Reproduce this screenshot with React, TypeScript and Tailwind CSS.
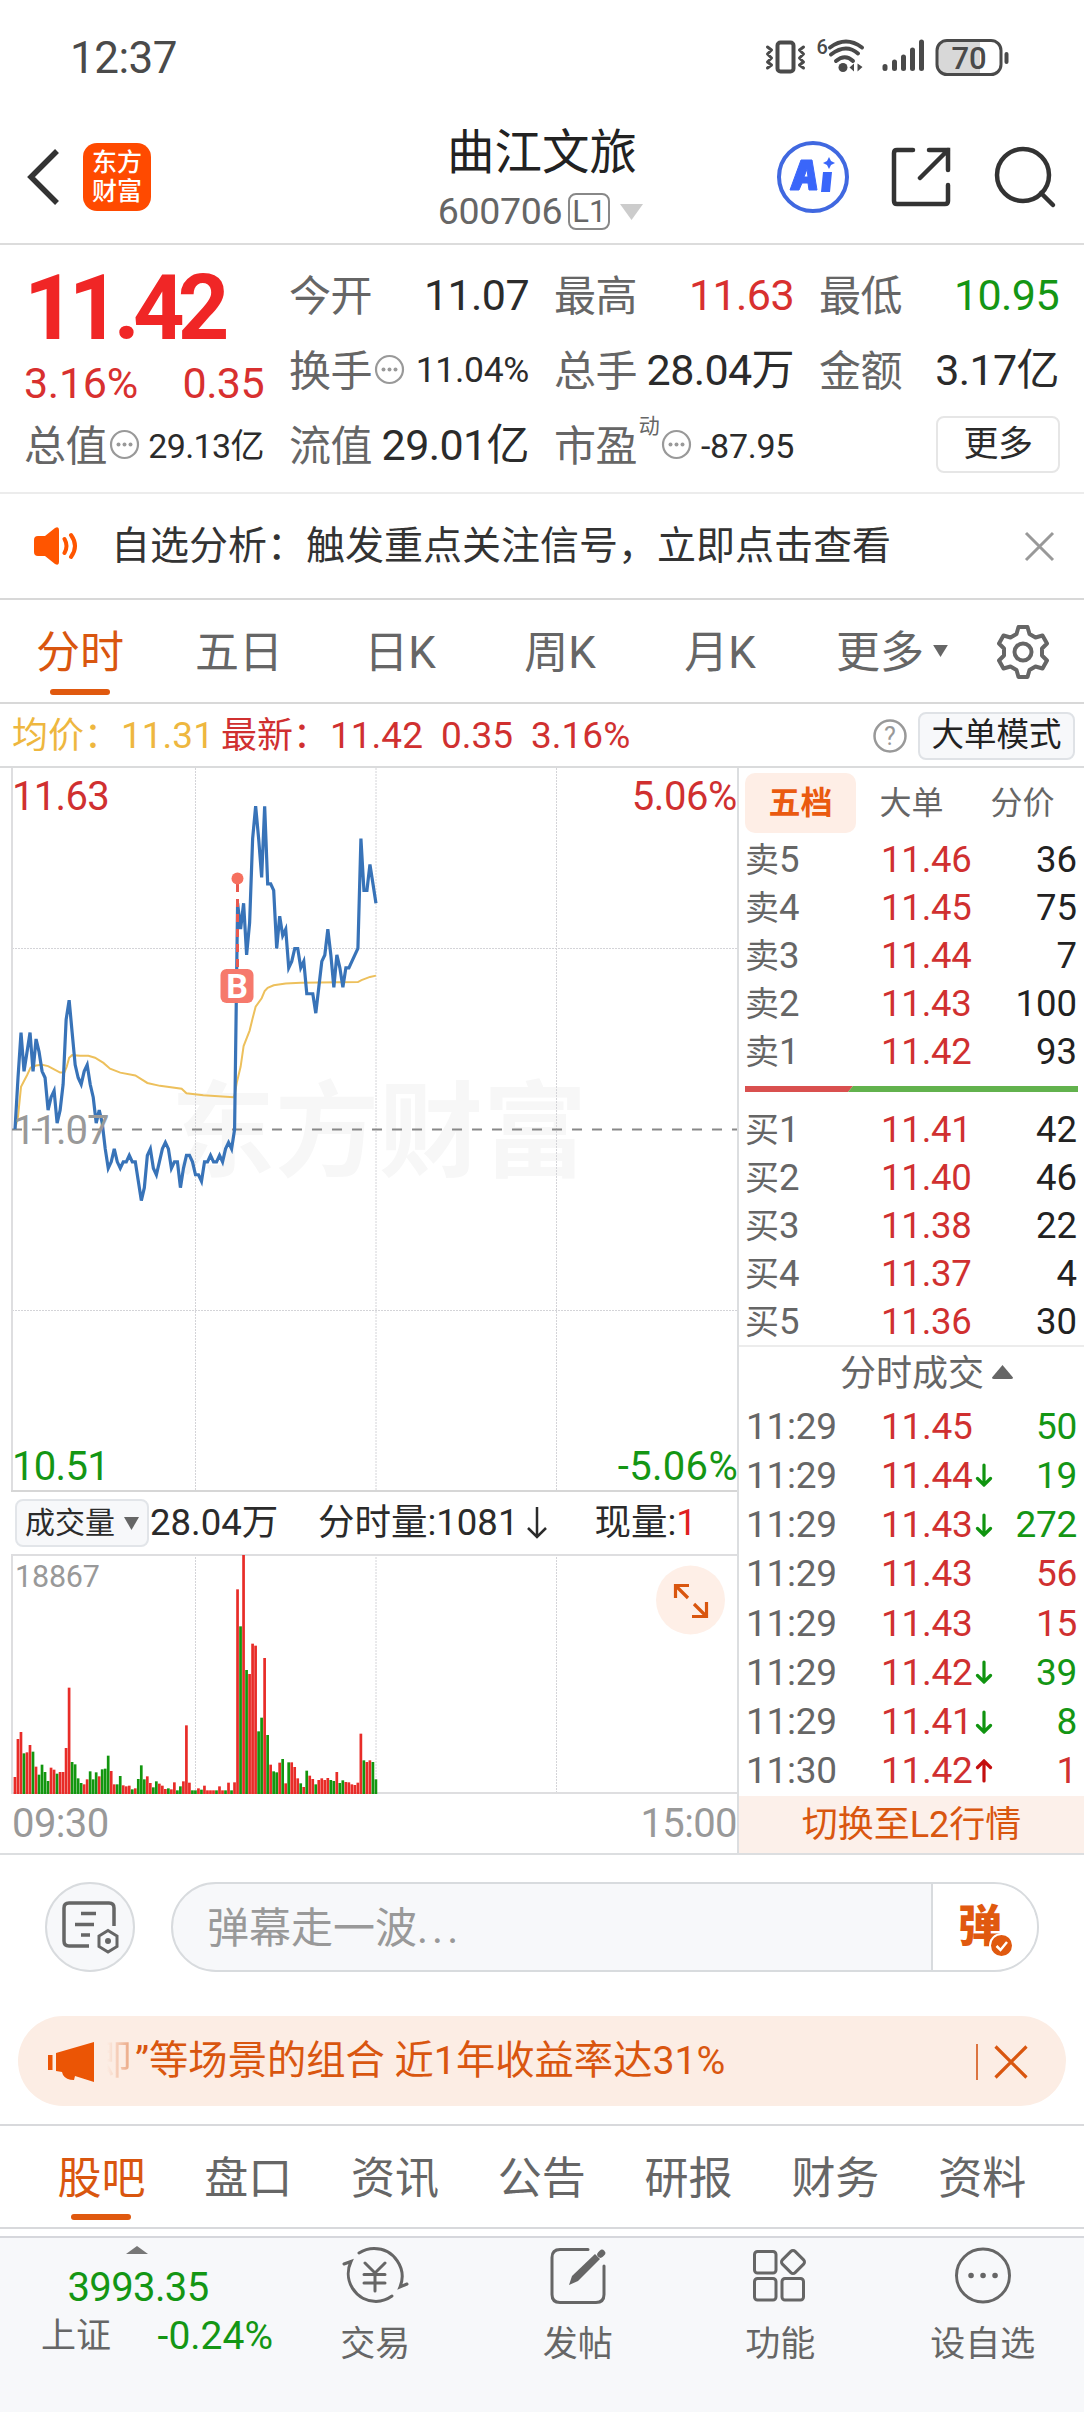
import type { ReactNode } from 'react'

// 相对昨收 11.07 的价差（单位：分），每分钟一个点
const PRICE_TICKS = [
  0, 8, 15, 9, 12, 15, 9, 14, 12, 9, 8, 3, 5, 6, 1, 3, 7, 17, 20, 15, 10, 8, 7, 9, 10, 7, 5, 1, 3, 1,
  -3, -6, -5, -3, -5, -6, -5, -5, -4, -5, -5, -8, -11, -9, -4, -3, -6, -7, -5, -3, -2, -3, -6, -5, -5,
  -9, -6, -4, -4, -5, -7, -7, -8, -5, -5, -4, -5, -5, -4, -5, -3, -2, -3, 0, 35, 31, 35, 27, 32, 45, 50,
  45, 39, 50, 38, 38, 37, 28, 33, 30, 31, 25, 26, 28, 28, 25, 26, 21, 21, 21, 18, 22, 26, 27, 31, 27, 22,
  27, 25, 22, 25, 25, 26, 27, 28, 45, 37, 37, 41, 38, 35,
]

// 均价线 [分钟, 价差]
const AVG_TICKS: [number, number][] = [
  [0, 0], [1, 2], [2, 6.6], [3, 7.5], [4, 8.4], [5.2, 9.6], [7, 9.9], [9, 10], [11, 9.8], [13, 9.3],
  [15, 8.8], [16.4, 8.8], [17.2, 9.7], [18, 11.1], [19, 11.5], [21.6, 11.4], [24.4, 11.4], [26.6, 11.1],
  [29.4, 10.3], [31.6, 9.4], [35, 8.8], [40, 8.35], [44, 7.2], [48.2, 6.75], [55.4, 6.3], [57, 5.6],
  [62.6, 5.3], [72.6, 5], [73, 5.3], [73.8, 7.4], [75, 9.7], [76, 12.9], [78, 15.3], [79, 17.2], [80, 19],
  [82, 20.3], [83, 21.4], [84, 21.9], [86, 22.3], [90, 22.6], [95, 22.7], [114, 22.8], [115.2, 23.1],
  [118, 23.6], [120, 23.8],
]

// 成交量，最高柱为 714；R 涨 G 跌
const VOLUMES =
  'R48 R162 R183 G119 R122 R144 G124 R79 G55 G85 G63 G36 R76 R70 G58 R63 R63 R135 R316 G93 G86 G44 G30 R26 R41 G65 G41 G62 R50 G71 G73 G112 R66 R26 G26 G51 R23 R20 R22 G11 R14 G42 G83 G41 R50 R30 G17 G35 R28 R22 R12 G14 R11 R32 G8 G20 R35 R203 R31 G8 G8 R14 G10 R22 R8 R8 R8 G8 R20 R8 G8 R31 G8 R32 R611 G500 R714 G369 R357 R448 R442 G185 G226 R405 G174 R85 G65 G62 R91 G102 R29 G92 R92 R78 R44 G29 R18 G67 R52 R42 G26 R39 R44 R39 R45 G39 G36 R63 G30 G38 R33 R32 R26 R24 R31 R178 G98 R93 R98 G93 G41'
    .split(' ')
    .map(s => ({ up: s[0] === 'R', h: Number(s.slice(1)) }))

const SELLS = [
  ['卖5', '11.46', '36'],
  ['卖4', '11.45', '75'],
  ['卖3', '11.44', '7'],
  ['卖2', '11.43', '100'],
  ['卖1', '11.42', '93'],
]

const BUYS = [
  ['买1', '11.41', '42'],
  ['买2', '11.40', '46'],
  ['买3', '11.38', '22'],
  ['买4', '11.37', '4'],
  ['买5', '11.36', '30'],
]

const DEALS = [
  { time: '11:29', price: '11.45', vol: '50', dir: '', up: false },
  { time: '11:29', price: '11.44', vol: '19', dir: 'down', up: false },
  { time: '11:29', price: '11.43', vol: '272', dir: 'down', up: false },
  { time: '11:29', price: '11.43', vol: '56', dir: '', up: true },
  { time: '11:29', price: '11.43', vol: '15', dir: '', up: true },
  { time: '11:29', price: '11.42', vol: '39', dir: 'down', up: false },
  { time: '11:29', price: '11.41', vol: '8', dir: 'down', up: false },
  { time: '11:30', price: '11.42', vol: '1', dir: 'up', up: true },
]

const minuteX = (i: number) => 15 + i * 3.008
const tickY = (t: number) => 363.5 - t * 6.465

function StatusBar() {
  return (
    <div className="h-[114px] pt-[1px] pl-[70px] pr-[73px] flex items-center justify-between text-[#4a4a4a]">
      <span className="text-[44px] leading-none tracking-[-0.5px]">12:37</span>
      <svg className="overflow-visible" width="246" height="38" viewBox="0 0 246 38" fill="none" stroke="#4a4a4a" strokeLinecap="round">
        <rect x="12.500" y="3.5" width="16" height="29" rx="3" strokeWidth="4" />
        <path d="M2.500 8l4 3-4 4 4 4-4 4 4 3-4 3M38.500 8l-4 3 4 4-4 4 4 4-4 3 4 3" strokeWidth="3" strokeLinejoin="round" />
        <text x="51.500" y="15" fontSize="20" fill="#4a4a4a" stroke="none" fontWeight="500">6</text>
        <path d="M65 8.500Q81 -3.500 97 8.500M66 15.500Q81 4 93 14.500M71 22Q80 14.500 88 22" strokeWidth="4" />
        <circle cx="78" cy="28.500" r="4.500" fill="#4a4a4a" stroke="none" />
        <path d="M84.500 28.500l4.500-4v8zM97.500 28l-5-3.500v8z" fill="#4a4a4a" stroke="none" />
        <path d="M120 27.500v2M129.500 23v6.500M138.500 18v11.500M147.500 11v18.500M156.500 3v26.500" strokeWidth="5" />
        <path d="M180 3h35v32h-35q-7 0-7-7V10q0-7 7-7z" fill="#d8d8d8" stroke="none" />
        <rect x="172" y="1.500" width="64" height="34" rx="10" strokeWidth="3" />
        <path d="M241.500 15v8" strokeWidth="4" />
        <text x="204" y="29.500" fontSize="31" fill="#4a4a4a" stroke="none" fontWeight="500" textAnchor="middle">70</text>
      </svg>
    </div>
  )
}

function Header() {
  return (
    <header className="h-[131px] pb-[3px] border-b-2 border-[#dcdcdc] flex items-center">
      <div className="w-[399px] pl-[26px] flex items-center">
        <svg width="34" height="56" viewBox="0 0 34 56" fill="none" stroke="#333" strokeWidth="5.500">
          <path d="M31 2L5 28l26 26" />
        </svg>
        <div className="ml-[23px] w-[68px] h-[68px] rounded-[14px] bg-[#ff4a00] flex items-center justify-center text-white text-[25px] leading-[29px] font-medium text-center">
          东方
          <br />
          财富
        </div>
      </div>
      <div className="w-[286px] flex flex-col items-center">
        <h1 className="h-[60px] pt-[1px] text-[47.500px] leading-[60px] text-[#222]">曲江文旅</h1>
        <div className="h-[50px] pt-[9px] pr-[3px] flex items-center text-[#666] text-[37.500px] leading-none">
          <span className="tracking-[-0.3px]">600706</span>
          <span className="ml-[6px] w-[42px] h-[37px] border-2 border-[#888] rounded-[8px] text-[31px] flex items-center justify-center">
            L1
          </span>
          <svg className="ml-[10px]" width="23" height="16" viewBox="0 0 23 16">
            <path d="M0 0h23L11.500 16z" fill="#ccc" />
          </svg>
        </div>
      </div>
      <div className="flex-1 pl-[91px] flex items-center">
        <svg width="74" height="74" viewBox="0 0 74 74" fill="none">
          <circle cx="37" cy="37" r="34" stroke="#4068e0" strokeWidth="4" />
          <path d="M25 20h11l5 30h-8l-1-7h-6l-3 7h-9zM31 29l-3 8h4z" fill="#3a66fa" stroke="#3a66fa" strokeWidth="1" strokeLinejoin="round" fillRule="evenodd" />
          <path d="M47 32h9l-2 20h-9zM53 17l2 4 4 2-4 2-2 4-2-4-4-2 4-2z" fill="#3a66fa" />
        </svg>
        <svg className="ml-[41px]" width="60" height="60" viewBox="0 0 60 60" fill="none" stroke="#333" strokeWidth="4.500" strokeLinecap="round">
          <path d="M22 3H6q-3 0-3 3v48q0 3 3 3h48q3 0 3-3V38M38 3h19v20M57 3L29 31" />
        </svg>
        <svg className="ml-[42px]" width="64" height="64" viewBox="0 0 64 64" fill="none" stroke="#333" strokeWidth="4.500" strokeLinecap="round">
          <circle cx="30" cy="30" r="26" />
          <path d="M48 48l12 12" />
        </svg>
      </div>
    </header>
  )
}

function InfoDot() {
  return (
    <svg className="shrink-0 ml-[2px] mb-[3px]" width="31" height="31" viewBox="0 0 31 31">
      <circle cx="15.500" cy="15.500" r="13.500" fill="none" stroke="#999" strokeWidth="2.200" />
      <circle cx="9.500" cy="15.500" r="2" fill="#999" />
      <circle cx="15.500" cy="15.500" r="2" fill="#999" />
      <circle cx="21.500" cy="15.500" r="2" fill="#999" />
    </svg>
  )
}

function Cell({ label, children }: { label: string; children: ReactNode }) {
  return (
    <div className="flex items-center h-[75px]">
      <span className="text-[#666] text-[42px] pt-[2px]">{label}</span>
      {children}
    </div>
  )
}

function Quote() {
  return (
    <section className="h-[249px] pt-[13px] pl-[24px] border-b-2 border-[#ececec] grid grid-cols-[240px_240px_240px_240px] gap-x-[25px] content-start text-[43px] leading-none tracking-[-0.6px] text-[#2b2b2b]">
      <div className="h-[150px] text-[#d8302f]">
        <div className="h-[101px] flex items-center text-[90px] font-bold tracking-[-6.800px] text-[#f02626]">11.42</div>
        <div className="mt-[3px] flex justify-between">
          <span className="tracking-[-0.3px]">3.16%</span>
          <span>0.35</span>
        </div>
      </div>
      <div>
        <Cell label="今开">
          <span className="ml-auto">11.07</span>
        </Cell>
        <Cell label="换手">
          <InfoDot />
          <span className="ml-auto text-[35.500px] tracking-[-0.3px]">11.04%</span>
        </Cell>
      </div>
      <div>
        <Cell label="最高">
          <span className="ml-auto text-[#d8302f]">11.63</span>
        </Cell>
        <Cell label="总手">
          <span className="ml-auto">28.04万</span>
        </Cell>
      </div>
      <div>
        <Cell label="最低">
          <span className="ml-auto text-[#149614]">10.95</span>
        </Cell>
        <Cell label="金额">
          <span className="ml-auto">3.17亿</span>
        </Cell>
      </div>
      <Cell label="总值">
        <InfoDot />
        <span className="ml-auto text-[34px]">29.13亿</span>
      </Cell>
      <Cell label="流值">
        <span className="ml-auto">29.01亿</span>
      </Cell>
      <Cell label="市盈">
        <span className="text-[21px] text-[#666] self-start pt-[8px] pl-[2px]">动</span>
        <InfoDot />
        <span className="ml-auto text-[34px] tracking-[-0.3px]">-87.95</span>
      </Cell>
      <div className="h-[75px] flex items-center justify-end">
        <button className="w-[124px] h-[57px] mb-[3px] -mr-[1px] border-2 border-[#e6e6e6] rounded-[8px] text-[35px]">更多</button>
      </div>
    </section>
  )
}

function Notice() {
  return (
    <section className="h-[106px] border-b-2 border-[#d8d8d8] pl-[34px] pr-[29px] flex items-center">
      <svg width="46" height="40" viewBox="0 0 46 40">
        <path d="M4 10h7L21 2q4-2 4 2v32q0 4-4 2l-10-8H4q-4 0-4-4V14q0-4 4-4z" fill="#ff5500" />
        <path d="M30.500 13q4 7 0 14M37 9q8 11 0 22" fill="none" stroke="#ff5500" strokeWidth="4" strokeLinecap="round" />
      </svg>
      <p className="ml-[31px] text-[39px] leading-none text-[#333] whitespace-nowrap">自选分析：触发重点关注信号，立即点击查看</p>
      <svg className="ml-auto" width="31" height="31" viewBox="0 0 31 31" stroke="#999" strokeWidth="3">
        <path d="M2 2l27 27M29 2L2 29" />
      </svg>
    </section>
  )
}

function PeriodTabs() {
  return (
    <nav className="h-[104px] border-b-2 border-[#d8d8d8] flex text-[44px] leading-[106px] text-[#666] whitespace-nowrap">
      <div className="w-[88px] ml-[36px] flex flex-col items-center text-[#d9560f]">
        <span className="h-[89px]">分时</span>
        <i className="w-[60px] h-[6px] rounded-full bg-[#e0590f]" />
      </div>
      <span className="w-[160px] text-center ml-[35px]">五日</span>
      <span className="w-[160px] text-center ml-[1px]">日K</span>
      <span className="w-[160px] text-center">周K</span>
      <span className="w-[160px] text-center">月K</span>
      <span className="ml-[36px]">更多</span>
      <svg className="mt-[45px] ml-[9px]" width="15" height="12" viewBox="0 0 16 13">
        <path d="M0 0h16L8 13z" fill="#666" />
      </svg>
      <svg className="mt-[24px] ml-[47px]" width="56" height="56" viewBox="0 0 56 56" fill="none" stroke="#666" strokeWidth="4" strokeLinejoin="round">
        <path d="M23.500 3h9l2 7 6 3.500 7-2 4.500 8-5 5v7l5 5-4.500 8-7-2-6 3.500-2 7h-9l-2-7-6-3.500-7 2-4.500-8 5-5v-7l-5-5 4.500-8 7 2 6-3.500z" />
        <circle cx="28" cy="28" r="8.500" />
      </svg>
    </nav>
  )
}

function PriceLine() {
  return (
    <div className="h-[62px] pt-[1px] pl-[12px] pr-[9px] flex items-center text-[37px] leading-none whitespace-nowrap text-[#d03030]">
      <span className="w-[109px] text-[36px] text-[#eeb73f]">均价：</span>
      <span className="w-[100px] text-[#eeb73f]">11.31</span>
      <span className="w-[109px] text-[36px]">最新：</span>
      <span className="w-[111px]">11.42</span>
      <span className="w-[90px]">0.35</span>
      <span>3.16%</span>
      <svg className="ml-auto" width="36" height="36" viewBox="0 0 36 36">
        <circle cx="18" cy="18" r="15.500" fill="none" stroke="#999" strokeWidth="2.500" />
        <text x="18" y="27" fontSize="25" textAnchor="middle" fill="#999">?</text>
      </svg>
      <button className="ml-[10px] w-[157px] h-[48px] border-2 border-[#dfe2e6] rounded-[8px] bg-[#f7f8fa] text-[32.500px] text-[#222]">
        大单模式
      </button>
    </div>
  )
}

function TimeChart() {
  const price = PRICE_TICKS.map((t, i) => `${minuteX(i)},${tickY(t)}`).join(' ')
  const avg = AVG_TICKS.map(([i, t]) => `${minuteX(i)},${tickY(t)}`).join(' ')

  return (
    <svg className="block" width="738" height="724" viewBox="0 2 738 724" fill="none">
      <text x="171" y="403" fontSize="104" fontWeight="700" fill="#f7f7f7">东方财富</text>
      <path d="M195.500 2V724M376 2V724M556.500 2V724M12 182.500H738M12 544.500H738" stroke="#d4d4d8" strokeWidth="1" strokeDasharray="2 1" />
      <path d="M12 0V725" stroke="#dedee0" strokeWidth="2" />
      <path d="M11 725H738" stroke="#d6d6d6" strokeWidth="2" />
      <path d="M12 363.500H738" stroke="#888" strokeWidth="2.200" strokeDasharray="10 10" />
      <polyline points={avg} stroke="#edc05c" strokeWidth="2" />
      <polyline points={price} stroke="#3873b8" strokeWidth="3.200" />
      <text x="13" y="378" fontSize="40" fill="#999" letterSpacing="-1">11.07</text>
      <path d="M237.500 118V210" stroke="#e8594f" strokeWidth="3" strokeDasharray="8 7" />
      <circle cx="237.500" cy="112.500" r="6" fill="#f6705f" />
      <rect x="220.500" y="203" width="33" height="34" rx="6" fill="#f6796c" />
      <text x="237" y="232" fontSize="34" fontWeight="700" textAnchor="middle" fill="#fff">B</text>
      <g fontSize="40">
        <text x="12" y="43.500" fill="#d03030" letterSpacing="-0.7">11.63</text>
        <text x="737" y="43.500" textAnchor="end" fill="#d03030" letterSpacing="-0.4">5.06%</text>
        <text x="12" y="714" fill="#149614" letterSpacing="-0.7">10.51</text>
        <text x="738" y="714" textAnchor="end" fill="#149614" letterSpacing="0.3">-5.06%</text>
      </g>
    </svg>
  )
}

function VolumeHead() {
  return (
    <div className="h-[62px] pl-[15px] flex items-center text-[36.500px] leading-none text-[#2b2b2b] whitespace-nowrap">
      <button className="w-[134px] h-[48px] border-2 border-[#e2e5e9] rounded-[8px] bg-[#f7f8fa] text-[30px] flex items-center justify-center">
        成交量
        <svg className="ml-[9px]" width="15" height="13" viewBox="0 0 15 13">
          <path d="M0 0h15L7.500 13z" fill="#666" />
        </svg>
      </button>
      <span className="ml-[1px] w-[168px]">28.04万</span>
      <span>分时量:1081</span>
      <svg className="ml-[9px]" width="20" height="34" viewBox="0 0 20 34" fill="none" stroke="#2b2b2b" strokeWidth="2.500">
        <path d="M10 1v30M1 22l9 9 9-9" />
      </svg>
      <span className="ml-[47px]">
        现量:<span className="text-[#e02020]">1</span>
      </span>
    </div>
  )
}

function VolumeChart() {
  return (
    <svg className="block" width="738" height="240" viewBox="0 0 738 240" fill="none">
      <path d="M195.500 0V239M376 0V239M556.500 0V239" stroke="#d4d4d8" strokeWidth="1" strokeDasharray="2 1" />
      <path d="M12 240V1H738" stroke="#dedee0" strokeWidth="2" />
      <path d="M12 239H738" stroke="#dedee0" strokeWidth="2" />
      {VOLUMES.map((v, i) => (
        <rect
          key={i}
          x={minuteX(i) - 1.4}
          y={239 - v.h / 3}
          width={2.7}
          height={v.h / 3 + 1}
          fill={v.up ? '#e82c28' : '#12960f'}
        />
      ))}
      <text x="15" y="33" fontSize="30.500" fill="#999" letterSpacing="-0.2">18867</text>
      <circle cx="690.500" cy="46" r="34.500" fill="#feefe7" />
      <path d="M675.500 44V31.500H689M676 32l12 12M692 62.500h14.500V48M706 62l-12-12" stroke="#d9560f" strokeWidth="3.200" />
    </svg>
  )
}

function OrderRow({ row }: { row: string[] }) {
  return (
    <div className="h-[48px] flex items-center text-[36.500px]">
      <span className="w-[136px] text-[#666]">
        <span className="text-[34px]">{row[0][0]}</span>
        {row[0][1]}
      </span>
      <span className="text-[#d03030] tracking-[-0.2px]">{row[1]}</span>
      <span className="ml-auto text-[#222]">{row[2]}</span>
    </div>
  )
}

function DealArrow({ dir }: { dir: string }) {
  if (!dir) return null
  return (
    <svg
      className={dir === 'up' ? 'ml-[3px] rotate-180' : 'ml-[3px]'}
      width="18"
      height="24"
      viewBox="0 0 18 24"
      fill="none"
      stroke={dir === 'up' ? '#c40f0f' : '#109410'}
      strokeWidth="3.200"
      strokeLinecap="round"
    >
      <path d="M9 2v20M2.500 15.500L9 22l6.500-6.500" />
    </svg>
  )
}

function OrderBook() {
  return (
    <aside className="w-[347px] h-[1085px] border-l-2 border-[#dcdee0] leading-none whitespace-nowrap flex flex-col">
      <div className="pt-[5px] pl-[6px] flex text-[32px] leading-[61px] text-[#666]">
        <span className="w-[111px] h-[60px] rounded-[10px] bg-[#feeee6] text-center font-bold text-[#ea5a10]">五档</span>
        <span className="w-[111px] text-center">大单</span>
        <span className="w-[111px] text-center">分价</span>
      </div>
      <div className="pl-[6px] pr-[7px] pt-[2px]">
        {SELLS.map(r => (
          <OrderRow key={r[0]} row={r} />
        ))}
      </div>
      <svg className="shrink-0 ml-[6px] mt-[10px]" width="333" height="6" viewBox="0 0 333 6">
        <path d="M0 0h108l-5 6H0z" fill="#d9504f" />
        <path d="M108 0h225v6H103z" fill="#62b24d" />
      </svg>
      <div className="h-[253px] pl-[6px] pr-[7px] pt-[14px]">
        {BUYS.map(r => (
          <OrderRow key={r[0]} row={r} />
        ))}
      </div>
      <div className="h-[57px] pl-[30px] border-t-2 border-[#ececec] flex items-center justify-center text-[36px] text-[#666]">
        分时成交
        <svg className="ml-[8px] mb-[5px]" width="21" height="14" viewBox="0 0 21 14">
          <path d="M10.500 0L21 12.500q0 1.500-2 1.500H2q-2 0-2-1.500z" fill="#666" />
        </svg>
      </div>
      <div className="pl-[7px] pr-[7px]">
        {DEALS.map((d, i) => (
          <div key={i} className="h-[49.250px] flex items-center text-[37px] tracking-[-0.300px]">
            <span className="w-[135px] text-[#666]">{d.time}</span>
            <span className="text-[#d03030]">{d.price}</span>
            <DealArrow dir={d.dir} />
            <span className={d.up ? 'ml-auto text-[#d03030]' : 'ml-auto text-[#149614]'}>{d.vol}</span>
          </div>
        ))}
      </div>
      <div className="mt-auto h-[58px] pt-[1px] bg-[#fcf0ea] flex items-center justify-center text-[36px] text-[#d9560f]">切换至L2行情</div>
    </aside>
  )
}

function Danmu() {
  return (
    <section className="h-[163px] pt-[27px] pl-[45px] border-t-2 border-[#dcdee0] flex items-start">
      <div className="w-[90px] h-[90px] rounded-full border-2 border-[#d8dbde] bg-[#f7f8fa] flex items-center justify-center">
        <svg width="58" height="56" viewBox="0 0 58 56" fill="none" stroke="#666" strokeWidth="3.500">
          <path d="M28 47H8q-5 0-5-5V9q0-5 5-5h40q5 0 5 5v18" />
          <path d="M20 14.500h15M14 25.500h19M20 36h9" />
          <path d="M47 31.500l9 5.500v10.500l-9 5.500-9-5.500V37z" strokeWidth="3" />
          <circle cx="47" cy="42" r="3" fill="#666" stroke="none" />
        </svg>
      </div>
      <div className="ml-[36px] w-[868px] h-[90px] rounded-full border-2 border-[#d8dbde] bg-[#f7f8fa] overflow-hidden flex items-center leading-none">
        <span className="flex-1 pt-[3px] pl-[34px] text-[42px] text-[#999]">弹幕走一波<span className="tracking-[4px]">...</span></span>
        <div className="w-[106px] h-full border-l-2 border-[#d8dbde] bg-white flex items-center pl-[25px] relative">
          <span className="text-[44px] font-black text-[#e0590f]">弹</span>
          <svg className="absolute left-[56px] top-[49px]" width="25" height="25" viewBox="0 0 25 25">
            <circle cx="12.500" cy="12.500" r="11.500" fill="#e0590f" stroke="#fff" strokeWidth="2" />
            <path d="M7.500 13l4 4 6.500-8" fill="none" stroke="#fff" strokeWidth="2.500" />
          </svg>
        </div>
      </div>
    </section>
  )
}

function Promo() {
  return (
    <section className="h-[108px] px-[18px]">
      <div className="h-[90px] pt-[1px] rounded-full bg-[#fcede4] pl-[30px] pr-[38px] flex items-center text-[39.300px] leading-none text-[#d9560f] whitespace-nowrap">
        <svg width="48" height="42" viewBox="0 0 48 42" fill="#eb5505">
          <path d="M0 14h4.500v15H0zM8 12L46 1v40l-19-6-1 4q-8 0-11-5l-1-3-6-1z" />
        </svg>
        <span className="ml-[11px] w-[25px] overflow-hidden flex justify-end bg-gradient-to-r from-[#fcede4] to-[#e9a27c] bg-clip-text text-transparent">即</span>
        <span className="pl-[3px]">”等场景的组合 近1年收益率达31%</span>
        <i className="ml-auto w-[2px] h-[36px] bg-[#dc7440]" />
        <svg className="ml-[16px]" width="34" height="34" viewBox="0 0 34 34" stroke="#d9560f" strokeWidth="3.200">
          <path d="M1.500 1.500l31 31M32.500 1.500l-31 31" />
        </svg>
      </div>
    </section>
  )
}

function SectionTabs() {
  const tabs = ['股吧', '盘口', '资讯', '公告', '研报', '财务', '资料']
  return (
    <nav className="h-[105px] border-y-2 border-[#d8d9dc] pl-[28px] flex text-[44px] leading-[106px] text-[#666]">
      {tabs.map((t, i) => (
        <div key={t} className={i === 0 ? 'w-[146.800px] flex flex-col items-center text-[#d9560f]' : 'w-[146.800px] flex flex-col items-center'}>
          <span className="h-[88px]">{t}</span>
          {i === 0 && <i className="w-[60px] h-[6px] rounded-full bg-[#e0590f]" />}
        </div>
      ))}
    </nav>
  )
}

const BOTTOM_ITEMS: { label: string; icon: ReactNode }[] = [
  {
    label: '交易',
    icon: (
      <>
        <path d="M18 7Q25 2.500 33 2.500A28 28 0 0 1 59 41L66 38" />
        <path d="M51 50Q44 55 35 55.500A28 28 0 0 1 10 15.500L3 18" />
        <path d="M24 17l10 10 10-10M34 27v18M23 28.500h21M23 37h21" />
      </>
    ),
  },
  {
    label: '发帖',
    icon: (
      <>
        <path d="M44 3.500H16q-8 0-8 8v37q0 8 8 8h36q8 0 8-8V20" />
        <path d="M25 39l3-9 23-22 5 5-22 22z" fill="#666" stroke="none" />
        <path d="M56.500 8.500l1.500-1.500" strokeWidth="6.500" />
      </>
    ),
  },
  {
    label: '功能',
    icon: (
      <>
        <rect x="8.500" y="5.500" width="21.500" height="21.500" rx="3" />
        <rect x="8.500" y="32.500" width="21.500" height="21.500" rx="3" />
        <rect x="36" y="32.500" width="21.500" height="21.500" rx="3" />
        <rect x="38" y="7" width="18" height="18" rx="3" transform="rotate(45 47 16)" />
      </>
    ),
  },
  {
    label: '设自选',
    icon: (
      <>
        <circle cx="34" cy="29.500" r="26.500" />
        <path d="M22 29.500h.1M34 29.500h.1M46 29.500h.1" strokeWidth="5.500" />
      </>
    ),
  },
]

function BottomBar() {
  return (
    <footer className="h-[176px] mt-[7px] border-t-2 border-[#d6d7dc] bg-[#f7f8fa] flex leading-none text-[#666]">
      <div className="w-[276px] flex flex-col items-center pt-[8px] text-[#149614]">
        <svg width="22" height="8" viewBox="0 0 22 8">
          <path d="M11 0l11 8H0z" fill="#777" />
        </svg>
        <span className="mt-[14px] pl-[2px] text-[40px] tracking-[-0.600px]">3993.35</span>
        <div className="mt-[9px] w-[232px] self-start ml-[41px] flex items-center justify-between text-[39px]">
          <span className="text-[35px] text-[#666]">上证</span>
          <span>-0.24%</span>
        </div>
      </div>
      <div className="flex">
        {BOTTOM_ITEMS.map(b => (
          <div key={b.label} className="w-[202.500px] flex flex-col items-center pt-[8px]">
            <svg width="68" height="60" viewBox="0 0 68 60" fill="none" stroke="#666" strokeWidth="3" strokeLinecap="round">
              {b.icon}
            </svg>
            <span className="mt-[21px] text-[35px]">{b.label}</span>
          </div>
        ))}
      </div>
    </footer>
  )
}

export default function App() {
  return (
    <div className="w-[1084px] h-[2412px] bg-white overflow-hidden font-['Roboto','Noto_Sans_CJK_SC',sans-serif]">
      <StatusBar />
      <Header />
      <Quote />
      <Notice />
      <PeriodTabs />
      <PriceLine />
      <main className="h-[1087px] border-t-2 border-[#dadbdc] flex">
        <div className="w-[737px]">
          <TimeChart />
          <VolumeHead />
          <VolumeChart />
          <div className="h-[59px] pt-[1px] pl-[12px] flex items-center justify-between text-[40px] tracking-[-0.600px] leading-none text-[#999]">
            <span>09:30</span>
            <span>15:00</span>
          </div>
        </div>
        <OrderBook />
      </main>
      <Danmu />
      <Promo />
      <SectionTabs />
      <BottomBar />
    </div>
  )
}
